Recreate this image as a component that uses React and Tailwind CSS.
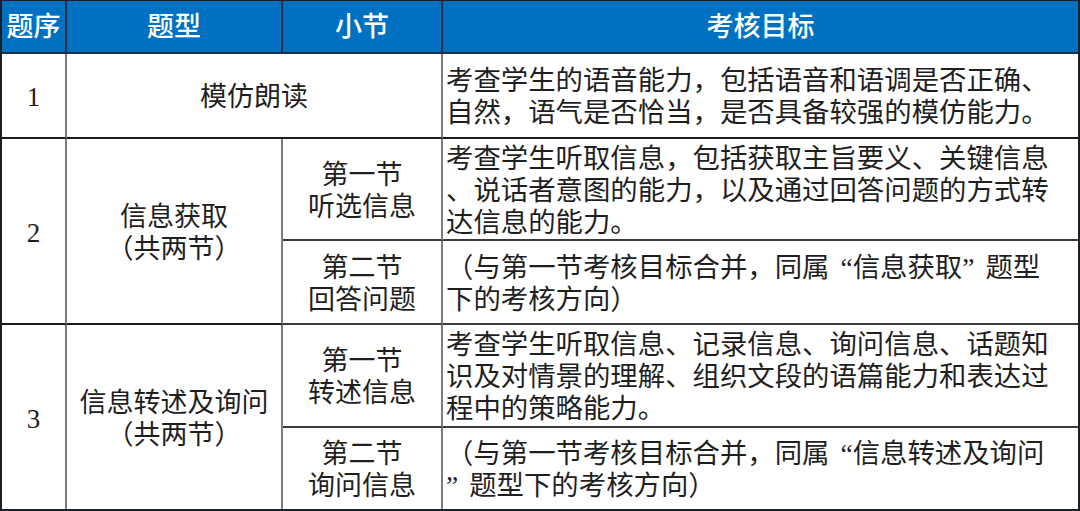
import React from 'react';

const FONT = { fontFamily: '"Liberation Serif", "Noto Sans CJK SC", serif' };

// quotes in the source are narrow serif glyphs with a little air on the outer side
const Q = ({ open }) => (
  <span className={open ? 'pl-[11px]' : 'pr-[11px]'}>{open ? '“' : '”'}</span>
);

const rows = [
  {
    no: '1',
    type: ['模仿朗读'],
    parts: [
      {
        goal: ['考查学生的语音能力，包括语音和语调是否正确、', '自然，语气是否恰当，是否具备较强的模仿能力。'],
      },
    ],
  },
  {
    no: '2',
    type: ['信息获取', '（共两节）'],
    parts: [
      {
        section: ['第一节', '听选信息'],
        goal: ['考查学生听取信息，包括获取主旨要义、关键信息', '、说话者意图的能力，以及通过回答问题的方式转', '达信息的能力。'],
      },
      {
        section: ['第二节', '回答问题'],
        goal: [
          <>（与第一节考核目标合并，同属<Q open />信息获取<Q />题型</>,
          '下的考核方向）',
        ],
      },
    ],
  },
  {
    no: '3',
    type: ['信息转述及询问', '（共两节）'],
    parts: [
      {
        section: ['第一节', '转述信息'],
        goal: ['考查学生听取信息、记录信息、询问信息、话题知', '识及对情景的理解、组织文段的语篇能力和表达过', '程中的策略能力。'],
      },
      {
        section: ['第二节', '询问信息'],
        goal: [
          <>（与第一节考核目标合并，同属<Q open />信息转述及询问</>,
          <><Q />题型下的考核方向）</>,
        ],
      },
    ],
  },
];

const Lines = ({ lines }) => (
  <>
    {lines.map((l, i) => (
      <span key={i} className="block whitespace-nowrap">
        {l}
      </span>
    ))}
  </>
);

const App = () => {
  return (
    <div className="w-[1080px] h-[511px] bg-white overflow-hidden" style={FONT}>
      <div className="w-full h-full grid grid-cols-[65px_216px_160px_635px] grid-rows-[53px_85px_102px_84px_103px_81px] border-l-2 border-r-2 border-t border-b-2 border-[#1b1f27] text-[27px] leading-[32px] text-[#1f1f1f] [text-spacing-trim:space-all]">
        {/* Header */}
        {['题序', '题型', '小节', '考核目标'].map((h, i) => (
          <div
            key={h}
            className={`flex items-center justify-center bg-[#0071c1] text-white font-medium border-b-2 border-b-[#1c2f4b] ${
              i < 3 ? 'border-r-2 border-r-[#1c2f4b]' : ''
            }`}
          >
            {h}
          </div>
        ))}

        {/* Row 1 */}
        <div className="flex items-center justify-center pt-[3px] border-r-2 border-r-[#7d7d7d] border-b-2 border-b-[#1b1b1b]">
          {rows[0].no}
        </div>
        <div className="col-span-2 flex items-center justify-center pt-[3px] border-r-2 border-r-[#7d7d7d] border-b-2 border-b-[#1b1b1b]">
          {rows[0].type[0]}
        </div>
        <div className="flex flex-col justify-center pl-[3px] pt-[3px] text-[27.4px] border-b-2 border-b-[#1b1b1b]">
          <Lines lines={rows[0].parts[0].goal} />
        </div>

        {/* Rows 2 and 3 */}
        {rows.slice(1).map((row, ri) => (
          <React.Fragment key={row.no}>
            <div
              className={`row-span-2 flex items-center justify-center pt-[3px] border-r-2 border-r-[#7d7d7d] ${
                ri === 0 ? 'border-b-2 border-b-[#1b1b1b]' : ''
              }`}
            >
              {row.no}
            </div>
            <div
              className={`row-span-2 flex flex-col items-center justify-center text-center pt-[3px] border-r-2 border-r-[#7d7d7d] ${
                ri === 0 ? 'border-b-2 border-b-[#1b1b1b]' : ''
              }`}
            >
              <Lines lines={row.type} />
            </div>
            {row.parts.map((p, pi) => {
              const bottom = !(ri === 1 && pi === 1);
              return (
                <React.Fragment key={pi}>
                  <div
                    className={`flex flex-col items-center justify-center text-center pt-[3px] border-r-2 border-r-[#7d7d7d] ${
                      bottom ? 'border-b-2 border-b-[#3a3a3a]' : ''
                    }`}
                  >
                    <Lines lines={p.section} />
                  </div>
                  <div
                    className={`flex flex-col justify-center pl-[3px] pt-[3px] text-[27.4px] ${
                      bottom ? 'border-b-2 border-b-[#3a3a3a]' : ''
                    }`}
                  >
                    <Lines lines={p.goal} />
                  </div>
                </React.Fragment>
              );
            })}
          </React.Fragment>
        ))}
      </div>
    </div>
  );
};

export default App;
